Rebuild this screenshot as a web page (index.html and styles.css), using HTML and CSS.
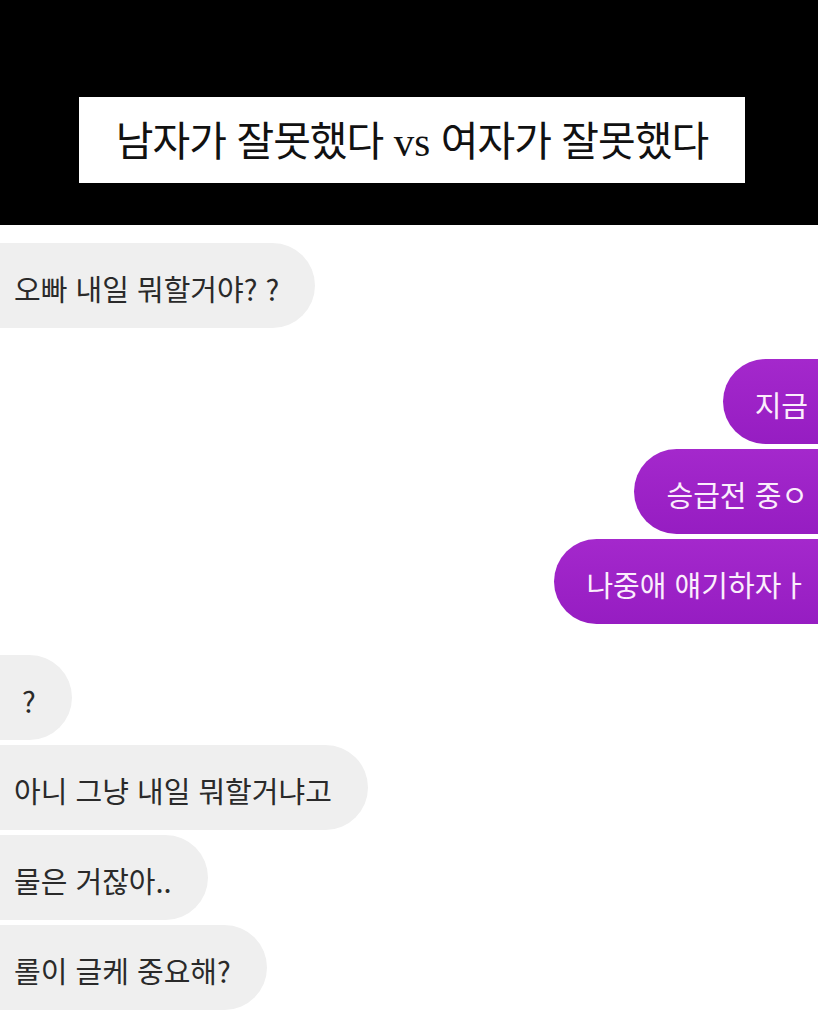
FILE: index.html
```html
<!DOCTYPE html>
<html lang="ko">
<head>
  <meta charset="UTF-8">
  <title>남자가 잘못했다 vs 여자가 잘못했다</title>
  <link rel="stylesheet" href="styles.css">
</head>
<body>
  <div class="header">
    <div class="title"><span>남자가 잘못했다 <span class="vs">vs</span> 여자가 잘못했다</span></div>
  </div>

  <div class="chat">
    <div class="group">
      <div class="bubble them">오빠 내일 뭐할거야? ?</div>
    </div>

    <div class="group">
      <div class="bubble me">지금</div>
      <div class="bubble me">승급전 중ㅇ</div>
      <div class="bubble me">나중애 얘기하자ㅏ</div>
    </div>

    <div class="group">
      <div class="bubble them short">?</div>
      <div class="bubble them">아니 그냥 내일 뭐할거냐고</div>
      <div class="bubble them">물은 거잖아..</div>
      <div class="bubble them">롤이 글케 중요해?</div>
    </div>
  </div>
</body>
</html>
```

FILE: styles.css
```css
body {
  margin: 0;
  background-color: #fff;
  font-family: "Noto Sans CJK KR", "Noto Sans", sans-serif;
  overflow: hidden;
}
.header {
  background-color: #000;
  height: 225px;
  padding-top: 97px;
  box-sizing: border-box;
}
.title {
  background-color: #fff;
  margin-left: 79px;
  width: 666px;
  height: 86px;
  padding-bottom: 4px;
  box-sizing: border-box;
  display: flex;
  align-items: center;
  justify-content: center;
  font-size: 41px;
  color: #111;
  letter-spacing: -1px;
}
.vs {
  font-family: "Liberation Serif", serif;
  letter-spacing: 0;
}
.chat {
  padding-top: 18px;
  display: flex;
  flex-direction: column;
  gap: 31px;
}
.group {
  display: flex;
  flex-direction: column;
  gap: 5px;
}
.bubble {
  height: 85px;
  border-radius: 43px;
  display: flex;
  align-items: center;
  padding-top: 5px;
  font-size: 29px;
  box-sizing: border-box;
}
.them {
  align-self: flex-start;
  background-color: #efefef;
  color: #2a2a2a;
  margin-left: -40px;
  padding-left: 54px;
  padding-right: 36px;
}
.them.short {
  padding-left: 62px;
  padding-right: 36px;
}
.me {
  align-self: flex-end;
  background: linear-gradient(#a428cc, #961dc2);
  color: #fbeefc;
  margin-right: -40px;
  padding-left: 32px;
  padding-right: 50px;
}
```
